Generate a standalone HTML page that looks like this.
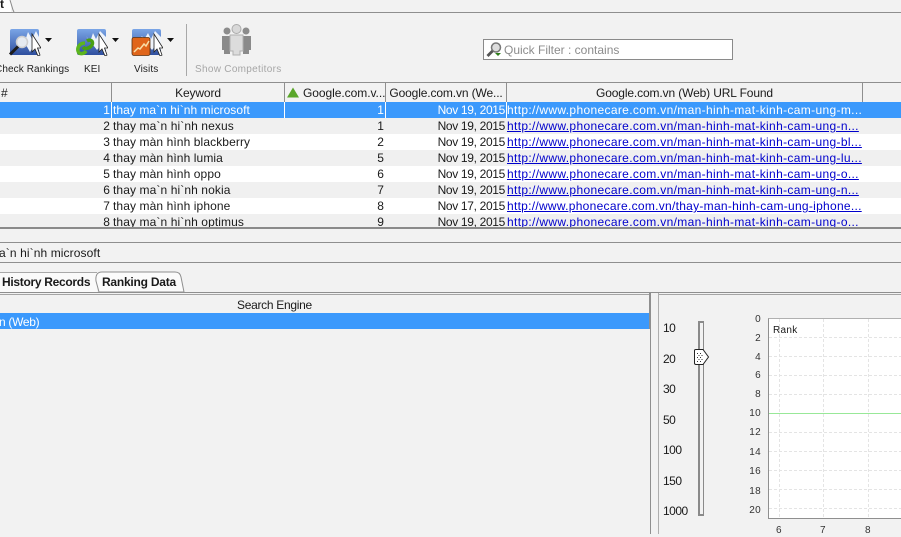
<!DOCTYPE html>
<html><head><meta charset="utf-8"><style>
html,body{margin:0;padding:0}
body{width:901px;height:534px;overflow:hidden;background:#f2f2f2;position:relative;font-family:"Liberation Sans",sans-serif;font-size:12px;color:#1a1a1a}
.a{position:absolute}
.t{position:absolute;white-space:pre;line-height:16px;letter-spacing:.1px}
.l{position:absolute;background:#8f8f8f}
.row{position:absolute;left:0;width:901px;height:16px}
.hd{position:absolute;top:83px;height:19px;line-height:21px;text-align:center;background:#f2f2f2;border-right:1px solid #8f8f8f;white-space:pre;letter-spacing:-.13px}
.u{color:#0000cc;text-decoration:underline}
.w{letter-spacing:.34px}
.d{letter-spacing:-.33px}
.s{font-size:10px;letter-spacing:.1px;line-height:12px}
.n{position:absolute;white-space:pre;font-size:12px;line-height:14px;letter-spacing:-.5px}
.y{position:absolute;font-size:10px;line-height:12px;text-align:right;width:20px;left:741px;color:#333;letter-spacing:.3px}
.x{position:absolute;font-size:10px;line-height:12px;top:525px;color:#333}
</style></head><body>

<!-- top tab -->
<div class="a" style="left:0;top:0;width:11px;height:12px;background:#fff"></div>
<svg class="a" style="left:8px;top:0" width="8" height="13"><path d="M2 0 L5 10 L6 12" fill="none" stroke="#888"/></svg>
<div class="t" style="left:0;top:-4px;font-weight:bold">t</div>
<div class="l" style="left:0;top:12px;width:901px;height:1px"></div>

<!-- toolbar icons -->
<svg class="a" style="left:9px;top:28px" width="32" height="28">
<defs><linearGradient id="b" x1="0" y1="0" x2="0" y2="1"><stop offset="0" stop-color="#7aa5e6"/><stop offset="1" stop-color="#2f4f9f"/></linearGradient></defs>
<rect x="1" y="1" width="29" height="26" rx="2" fill="url(#b)"/>
<path d="M12 8 L16 13 L19 4 L23 11 L27 3 L30 9 V22 L26 16 L21 24 Z" fill="#eef3fa"/>
<path d="M23 6 L23 24 L26 21 L29 28 L31 27 L28.500 20 L32 20 Z" fill="#fff" stroke="#222" stroke-width=".8"/>
<circle cx="13" cy="14" r="5.500" fill="#e6ebf1" stroke="#cfcfcf" stroke-width="1.500"/>
<path d="M9 18.500 L1 26.500" stroke="#1c1c1c" stroke-width="3"/>
</svg>
<svg class="a" style="left:45px;top:38px" width="8" height="5"><path d="M0 0H7L3.500 4Z" fill="#111"/></svg>
<div class="t s" style="left:-5px;top:64px;color:#222">Check Rankings</div>

<svg class="a" style="left:76px;top:28px" width="32" height="28">
<rect x="1" y="1" width="29" height="26" rx="2" fill="url(#b)"/>
<path d="M10 8 L14 14 L17 5 L20 11 L24 3 L30 9 V22 L26 16 L21 22 Z" fill="#eef3fa"/>
<path d="M23 6 L23 24 L26 21 L29 28 L31 27 L28.500 20 L32 20 Z" fill="#fff" stroke="#222" stroke-width=".8"/>
<path d="M9 15 C4 15 1 19 2 23 C3 27 8 26 10 23" fill="none" stroke="#5cb51e" stroke-width="3.500"/>
<path d="M7 19 C9 22 14 20 16 17 C18 13 14 11 11 13" fill="none" stroke="#49a012" stroke-width="3.500"/>
</svg>
<svg class="a" style="left:112px;top:38px" width="8" height="5"><path d="M0 0H7L3.500 4Z" fill="#111"/></svg>
<div class="t s" style="left:84px;top:64px;color:#222">KEI</div>

<svg class="a" style="left:131px;top:28px" width="32" height="28">
<rect x="1" y="1" width="29" height="26" rx="2" fill="url(#b)"/>
<path d="M10 8 L14 10 L17 5 L20 11 L24 3 L30 9 V22 L26 16 L21 22 Z" fill="#eef3fa"/>
<path d="M23 6 L23 24 L26 21 L29 28 L31 27 L28.500 20 L32 20 Z" fill="#fff" stroke="#222" stroke-width=".8"/>
<rect x="1" y="9.500" width="18" height="18" rx="2" fill="#e0651a" stroke="#5a3212" stroke-width=".8"/>
<path d="M3 24 L7 20 L9 21 L13 16 L15 18 L18 13" fill="none" stroke="#f8dfa8" stroke-width="1.500"/>
</svg>
<svg class="a" style="left:167px;top:38px" width="8" height="5"><path d="M0 0H7L3.500 4Z" fill="#111"/></svg>
<div class="t s" style="left:134px;top:64px;color:#222">Visits</div>

<div class="l" style="left:186px;top:24px;width:1px;height:52px;background:#a8a8a8"></div>

<svg class="a" style="left:220px;top:24px" width="33" height="32">
<circle cx="7" cy="7" r="3.500" fill="#8c8c8c"/><circle cx="26" cy="7" r="3.500" fill="#8c8c8c"/>
<path d="M2 12 H12 V26 H10 V30 H4 V26 H2 Z" fill="#8a8a8a"/>
<path d="M21 12 H31 V26 H29 V30 H23 V26 H21 Z" fill="#8a8a8a"/>
<circle cx="16.500" cy="5" r="4.500" fill="#d8d8d8" stroke="#aaa"/>
<path d="M10 11 H23 V27 H20 V31 H13 V27 H10 Z" fill="#dcdcdc" stroke="#b0b0b0"/>
</svg>
<div class="t s" style="left:195px;top:64px;color:#a6a6a6;letter-spacing:.3px">Show Competitors</div>

<!-- quick filter -->
<div class="a" style="left:483px;top:39px;width:248px;height:19px;background:#fff;border:1px solid #8a8a8a"></div>
<svg class="a" style="left:485px;top:41px" width="18" height="17">
<circle cx="11" cy="6.500" r="4.500" fill="#ddd" stroke="#777" stroke-width="1.500"/><path d="M7.500 10 L2.500 15" stroke="#555" stroke-width="2.800"/><path d="M10 12H16L13 15Z" fill="#2e7d1a"/></svg>
<div class="t" style="left:504px;top:42px;color:#8c8c8c;letter-spacing:0">Quick Filter : contains</div>

<!-- table header -->
<div class="l" style="left:0;top:82px;width:901px;height:1px"></div>
<div class="a" style="left:0;top:83px;width:901px;height:19px;background:#f2f2f2"></div>
<div class="hd" style="left:0;width:111px;text-align:left;text-indent:1px">#</div>
<div class="hd" style="left:112px;width:172px">Keyword</div>
<div class="hd" style="left:285px;width:100px;text-align:left;text-indent:18px;letter-spacing:-.05px">Google.com.v...</div>
<svg class="a" style="left:287px;top:87px" width="13" height="11"><path d="M0 10.500 L6 .5 L12 10.500Z" fill="#5aa62a"/></svg>
<div class="hd" style="left:386px;width:120px">Google.com.vn (We...</div>
<div class="hd" style="left:507px;width:355px">Google.com.vn (Web) URL Found</div>

<!-- rows -->
<div class="row" style="top:102px;background:#3b99fc"></div>
<div class="row" style="top:118px;background:#f0f0f0"></div>
<div class="row" style="top:134px;background:#fff"></div>
<div class="row" style="top:150px;background:#f0f0f0"></div>
<div class="row" style="top:166px;background:#fff"></div>
<div class="row" style="top:182px;background:#f0f0f0"></div>
<div class="row" style="top:198px;background:#fff"></div>
<div class="row" style="top:214px;height:14px;background:#f0f0f0"></div>
<div class="a" style="left:111px;top:102px;width:1px;height:16px;background:#fff"></div>
<div class="a" style="left:284px;top:102px;width:1px;height:16px;background:#fff"></div>
<div class="a" style="left:385px;top:102px;width:1px;height:16px;background:#fff"></div>
<div class="a" style="left:506px;top:102px;width:1px;height:16px;background:#fff"></div>

<div class="a" style="left:0;top:102px;width:901px;height:126px;overflow:hidden">
<div class="t" style="right:791px;top:0;color:#fff">1</div><div class="t" style="left:113px;top:0;color:#fff;letter-spacing:.06px">thay ma`n hi`nh microsoft</div><div class="t" style="right:517px;top:0;color:#fff">1</div><div class="t d" style="right:396px;top:0;color:#fff">Nov 19, 2015</div><div class="t w" style="left:507px;top:0;color:#fff">http://www.phonecare.com.vn/man-hinh-mat-kinh-cam-ung-m...</div>
<div class="t" style="right:791px;top:16px">2</div><div class="t" style="left:113px;top:16px">thay ma`n hi`nh nexus</div><div class="t" style="right:517px;top:16px">1</div><div class="t d" style="right:396px;top:16px">Nov 19, 2015</div><div class="t u w" style="left:507px;top:16px">http://www.phonecare.com.vn/man-hinh-mat-kinh-cam-ung-n...</div>
<div class="t" style="right:791px;top:32px">3</div><div class="t" style="left:113px;top:32px">thay màn hình blackberry</div><div class="t" style="right:517px;top:32px">2</div><div class="t d" style="right:396px;top:32px">Nov 19, 2015</div><div class="t u w" style="left:507px;top:32px">http://www.phonecare.com.vn/man-hinh-mat-kinh-cam-ung-bl...</div>
<div class="t" style="right:791px;top:48px">4</div><div class="t" style="left:113px;top:48px">thay màn hình lumia</div><div class="t" style="right:517px;top:48px">5</div><div class="t d" style="right:396px;top:48px">Nov 19, 2015</div><div class="t u w" style="left:507px;top:48px">http://www.phonecare.com.vn/man-hinh-mat-kinh-cam-ung-lu...</div>
<div class="t" style="right:791px;top:64px">5</div><div class="t" style="left:113px;top:64px">thay màn hình oppo</div><div class="t" style="right:517px;top:64px">6</div><div class="t d" style="right:396px;top:64px">Nov 19, 2015</div><div class="t u w" style="left:507px;top:64px">http://www.phonecare.com.vn/man-hinh-mat-kinh-cam-ung-o...</div>
<div class="t" style="right:791px;top:80px">6</div><div class="t" style="left:113px;top:80px">thay ma`n hi`nh nokia</div><div class="t" style="right:517px;top:80px">7</div><div class="t d" style="right:396px;top:80px">Nov 19, 2015</div><div class="t u w" style="left:507px;top:80px">http://www.phonecare.com.vn/man-hinh-mat-kinh-cam-ung-n...</div>
<div class="t" style="right:791px;top:96px">7</div><div class="t" style="left:113px;top:96px">thay màn hình iphone</div><div class="t" style="right:517px;top:96px">8</div><div class="t d" style="right:396px;top:96px">Nov 17, 2015</div><div class="t u" style="left:507px;top:96px;letter-spacing:.28px">http://www.phonecare.com.vn/thay-man-hinh-cam-ung-iphone...</div>
<div class="t" style="right:791px;top:112px">8</div><div class="t" style="left:113px;top:112px">thay ma`n hi`nh optimus</div><div class="t" style="right:517px;top:112px">9</div><div class="t d" style="right:396px;top:112px">Nov 19, 2015</div><div class="t u w" style="left:507px;top:112px">http://www.phonecare.com.vn/man-hinh-mat-kinh-cam-ung-o...</div>
</div>

<div class="l" style="left:0;top:227px;width:901px;height:2px;background:#8a8a8a"></div>

<!-- selected keyword bar -->
<div class="l" style="left:0;top:242px;width:901px;height:1px"></div>
<div class="t" style="left:-1px;top:245px">a`n hi`nh microsoft</div>
<div class="l" style="left:0;top:262px;width:901px;height:1px"></div>

<!-- tabs -->
<div class="a" style="left:0;top:272px;width:97px;height:20px;background:#fafafa;border-top:1px solid #a8a8a8"></div>
<svg class="a" style="left:94px;top:271px" width="92" height="22">
<path d="M5 21 L2 10 Q1 1 8 1 H81 Q86 1 87 6 L90 21 Z" fill="#fbfbfb" stroke="#8f8f8f"/></svg>
<div class="t" style="left:2px;top:274px;font-weight:bold;letter-spacing:-.3px">History Records</div>
<div class="t" style="left:102px;top:274px;font-weight:bold;letter-spacing:-.23px">Ranking Data</div>
<div class="l" style="left:0;top:292px;width:901px;height:1px"></div>
<div class="l" style="left:0;top:294px;width:901px;height:1px;background:#a5a5a5"></div>

<!-- search engine table -->
<div class="a" style="left:0;top:295px;width:649px;height:239px;background:#f2f2f2"></div>
<div class="t" style="left:237px;top:297px;letter-spacing:-.3px">Search Engine</div>
<div class="a" style="left:0;top:313px;width:649px;height:16px;background:#3b99fc"></div>
<div class="t" style="left:-1px;top:314px;color:#fff;letter-spacing:-.3px">n (Web)</div>
<div class="l" style="left:649px;top:293px;width:1px;height:36px"></div>
<div class="l" style="left:650px;top:293px;width:1px;height:241px"></div>
<div class="l" style="left:658px;top:293px;width:1px;height:241px;background:#aeaeae"></div>
<div class="a" style="left:651px;top:293px;width:7px;height:2px;background:#f2f2f2"></div>

<!-- slider -->
<div class="n" style="left:663px;top:321px">10</div>
<div class="n" style="left:663px;top:352px">20</div>
<div class="n" style="left:663px;top:382px">30</div>
<div class="n" style="left:663px;top:413px">50</div>
<div class="n" style="left:663px;top:443px">100</div>
<div class="n" style="left:663px;top:474px">150</div>
<div class="n" style="left:663px;top:504px">1000</div>
<div class="a" style="left:698px;top:321px;width:3px;height:191px;background:#f2f2f2;border:2px solid #8a8a8a;border-right-width:1px;border-top-width:2px"></div>
<svg class="a" style="left:693px;top:349px" width="18" height="17"><path d="M1.500 1.500 Q1.500 .5 3 .5 H10 L15.500 8 L10 15.500 H3 Q1.500 15.500 1.500 14 Z" fill="#fff" stroke="#222"/><path d="M4 4h1v1H4zM7 4h1v1H7zM5.500 6h1v1h-1zM8.500 6h1v1h-1zM4 8h1v1H4zM7 8h1v1H7zM5.500 10h1v1h-1zM8.500 10h1v1h-1zM4 12h1v1H4zM7 12h1v1H7z" fill="#333"/></svg>

<!-- chart -->
<div class="a" style="left:768px;top:318px;width:133px;height:201px;background:#fff;border-top:1px solid #b0b0b0;border-left:1px solid #8f8f8f;border-bottom:1px solid #8f8f8f;box-sizing:border-box"></div>
<svg class="a" style="left:769px;top:319px" width="132" height="199">
<g stroke="#e4e4e4" stroke-dasharray="3 2" fill="none">
<path d="M10.500 0V199M54.500 0V199M99.500 0V199"/>
<path d="M0 18.500H132M0 37.500H132M0 56.500H132M0 75.500H132M0 113.500H132M0 132.500H132M0 151.500H132M0 170.500H132M0 189.500H132"/>
</g>
<path d="M0 94.500H132" stroke="#98e898"/>
</svg>
<div class="t" style="left:773px;top:324px;font-size:10px;line-height:14px;letter-spacing:.3px">Rank</div>
<div class="y" style="top:314px">0</div>
<div class="y" style="top:333px">2</div>
<div class="y" style="top:352px">4</div>
<div class="y" style="top:370px">6</div>
<div class="y" style="top:389px">8</div>
<div class="y" style="top:408px">10</div>
<div class="y" style="top:427px">12</div>
<div class="y" style="top:447px">14</div>
<div class="y" style="top:466px">16</div>
<div class="y" style="top:486px">18</div>
<div class="y" style="top:505px">20</div>
<div class="x" style="left:776px">6</div>
<div class="x" style="left:820px">7</div>
<div class="x" style="left:865px">8</div>
</body></html>
